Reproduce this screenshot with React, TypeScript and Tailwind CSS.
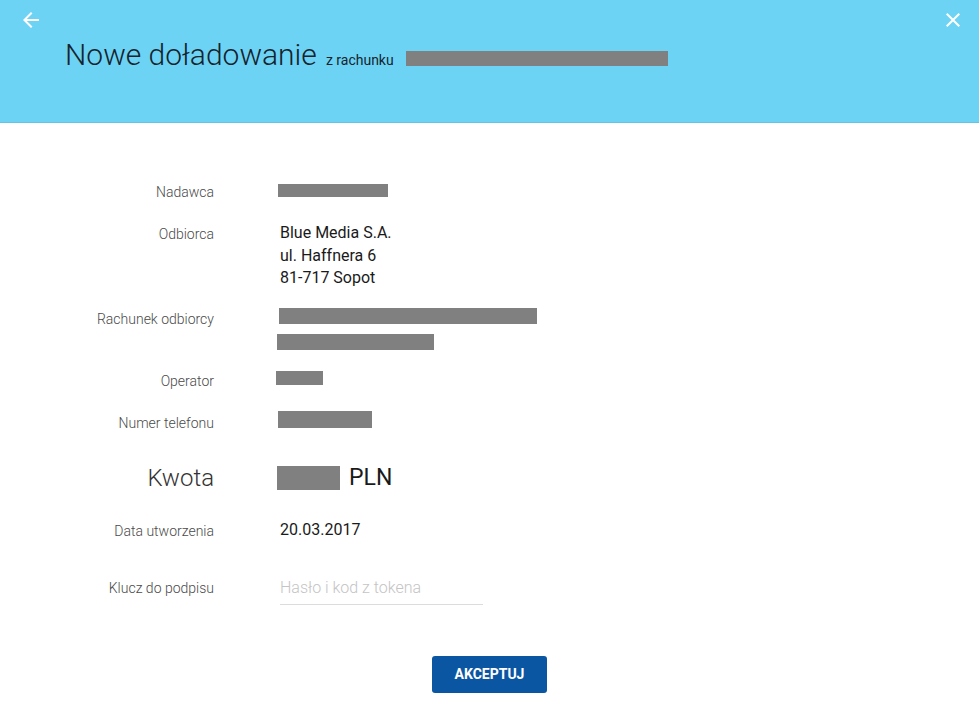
import type { ReactNode } from 'react'

function Bar({ className }: { className: string }) {
  return <div className={`bg-[#808080] ${className}`} />
}

function Row({ label, children, className = '', labelClass = 'translate-y-[1px] text-[14px] font-light text-[#4a4a4a] leading-[22px]' }: { label: string; children: ReactNode; className?: string; labelClass?: string }) {
  return (
    <div className={`flex items-start ${className}`}>
      <div className={`w-[214px] shrink-0 text-right ${labelClass}`}>{label}</div>
      <div className="ml-[66px] flex-1">{children}</div>
    </div>
  )
}

export default function App() {
  return (
    <div className="min-h-screen w-[979px] bg-white font-['Roboto',sans-serif]">
      <header className="h-[123px] border-b border-[#63c4e4] bg-[#6dd3f5]">
        <div className="flex justify-between pl-[19px] pr-[14px] pt-[8px]">
          <svg width="24" height="24" viewBox="0 0 24 24" fill="#ffffff">
            <path d="M20 11H7.83l5.59-5.59L12 4l-8 8 8 8 1.41-1.41L7.83 13H20v-2z" />
          </svg>
          <svg width="24" height="24" viewBox="0 0 24 24" fill="#ffffff">
            <path d="M19 6.41L17.59 5 12 10.59 6.41 5 5 6.41 10.59 12 5 17.59 6.41 19 12 13.41 17.59 19 19 17.59 13.41 12z" />
          </svg>
        </div>
        <div className="mt-[5px] flex items-baseline pl-[65px]">
          <h1 className="text-[30px] font-light leading-[36px] text-[#16232c]">Nowe doładowanie</h1>
          <span className="ml-[9px] text-[14px] text-[#16232c]">z rachunku</span>
          <div className="ml-[12px] h-[15px] w-[262px] translate-y-[1px] bg-[#808080]" />
        </div>
      </header>

      <main className="pt-[57px]">
        <Row label="Nadawca">
          <Bar className="ml-[-2px] mt-[4px] h-[13px] w-[110px]" />
        </Row>

        <Row label="Odbiorca" className="mt-[20px]">
          <div className="text-[16px] leading-[22.5px] text-[#1a1a1a]">
            <div>Blue Media S.A.</div>
            <div>ul. Haffnera 6</div>
            <div>81-717 Sopot</div>
          </div>
        </Row>

        <Row label="Rachunek odbiorcy" className="mt-[17px]">
          <Bar className="ml-[-1px] mt-[1px] h-[16px] w-[258px]" />
          <Bar className="ml-[-3px] mt-[10px] h-[16px] w-[157px]" />
        </Row>

        <Row label="Operator" className="mt-[19px]">
          <Bar className="ml-[-4px] mt-[2px] h-[14px] w-[47px]" />
        </Row>

        <Row label="Numer telefonu" className="mt-[20px]">
          <Bar className="ml-[-2px] h-[17px] w-[94px]" />
        </Row>

        <Row label="Kwota" className="mt-[33px]" labelClass="text-[24px] font-light text-[#333] leading-[24px]">
          <div className="flex items-center">
            <Bar className="ml-[-3px] h-[24px] w-[63px]" />
            <span className="ml-[9px] text-[23px] leading-[24px] text-[#1a1a1a]">PLN</span>
          </div>
        </Row>

        <Row label="Data utworzenia" className="mt-[29px]">
          <div className="text-[16px] leading-[22px] text-[#1a1a1a]">20.03.2017</div>
        </Row>

        <Row label="Klucz do podpisu" className="mt-[35px]">
          <input
            placeholder="Hasło i kod z tokena"
            className="w-[203px] border-b border-[#dcdcdc] pb-[5px] text-[16px] leading-[22px] text-[#1a1a1a] outline-none placeholder:font-light placeholder:text-[#c4c4c4]"
          />
        </Row>

        <div className="mt-[51px] flex justify-center">
          <button className="h-[37px] w-[115px] rounded-[3px] bg-[#0b56a3] text-[14px] font-bold text-white">
            AKCEPTUJ
          </button>
        </div>
      </main>
    </div>
  )
}
